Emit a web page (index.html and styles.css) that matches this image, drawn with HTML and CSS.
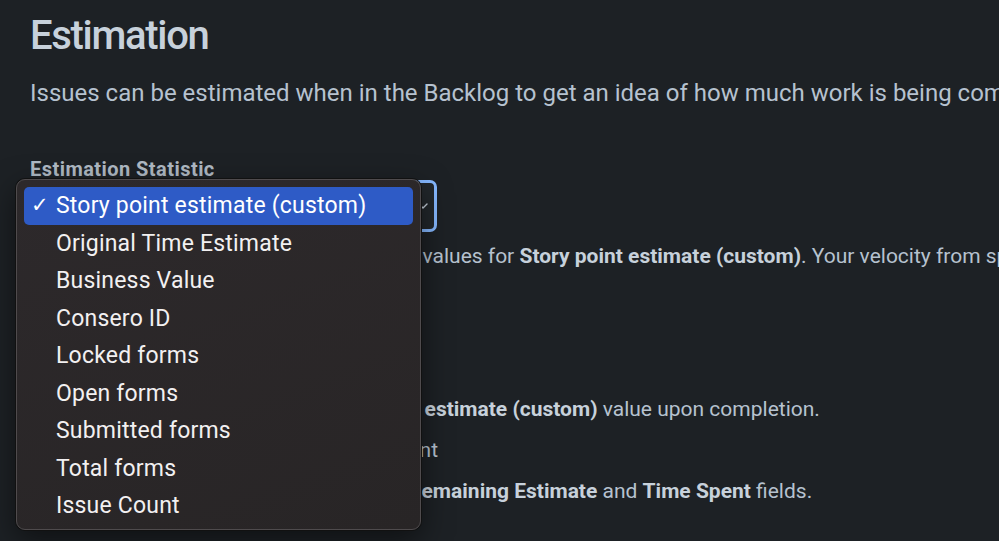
FILE: index.html
```html
<!DOCTYPE html>
<html lang="en">

<head>
    <meta charset="UTF-8">
    <meta name="viewport" content="width=device-width, initial-scale=1.0">
    <title>Board settings - Estimation</title>
    <link rel="stylesheet" href="styles.css">
</head>

<body>
    <main class="page">
        <h1 class="title">Estimation</h1>
        <p class="intro">Issues can be estimated when in the Backlog to get an idea of how much work is being committed to in a sprint.</p>

        <!-- Estimation statistic field, with the native popup open -->
        <div class="field">
            <div class="field-label">Estimation Statistic</div>
            <div class="select-wrap">
                <div class="select-box">
                    <span class="select-value">Story point estimate (custom)</span>
                    <svg class="chevron" width="14" height="14" viewBox="0 0 14 14">
                        <path d="M3 5l4 4 4-4" fill="none" stroke="#c7d1db" stroke-width="1.4" stroke-linecap="round" stroke-linejoin="round"/>
                    </svg>
                </div>
                <ul class="menu">
                    <li class="menu-item selected"><span class="check">✓</span>Story point estimate (custom)</li>
                    <li class="menu-item">Original Time Estimate</li>
                    <li class="menu-item">Business Value</li>
                    <li class="menu-item">Consero ID</li>
                    <li class="menu-item">Locked forms</li>
                    <li class="menu-item">Open forms</li>
                    <li class="menu-item">Submitted forms</li>
                    <li class="menu-item">Total forms</li>
                    <li class="menu-item">Issue Count</li>
                </ul>
            </div>
            <p class="help">The backlog and board will use estimated values for <b>Story point estimate (custom)</b>. Your velocity from sprints is calculated from this.</p>
        </div>

        <!-- Time tracking -->
        <section class="tracking">
            <h2 class="field-label">Time Tracking</h2>
            <div class="option"><span class="radio"></span>None</div>
            <p class="help">Tracking only uses the Story point <b>estimate (custom)</b> value upon completion.</p>
            <div class="option"><span class="radio checked"></span>Remaining Estimate and Time Spent</div>
            <p class="help">Time tracking is based upon the <b>Remaining Estimate</b> and <b>Time Spent</b> fields.</p>
        </section>
    </main>
</body>

</html>
```

FILE: styles.css
```css
body {
    margin: 0;
    background-color: #1d2125;
    color: #b6c2cf;
    font-family: Roboto, "Liberation Sans", sans-serif;
}

.page {
    padding: 12px 0 0 30px;
    white-space: nowrap;
    overflow: hidden;
    height: 529px;
}

.title {
    margin: 0;
    font-size: 40px;
    line-height: 48px;
    font-weight: 500;
    letter-spacing: -1.3px;
    color: #c7d1db;
}

.intro {
    margin: 17px 0 0;
    font-size: 24px;
    line-height: 32px;
}

.field-label {
    margin: 50px 0 0;
    font-size: 20px;
    line-height: 20px;
    font-weight: 700;
    letter-spacing: 0.45px;
    color: #b0bac4;
}

.select-wrap {
    position: relative;
    width: 407px;
    margin-top: 1px;
}

.select-box {
    box-sizing: border-box;
    height: 52px;
    border: 3px solid #85b8ff;
    border-radius: 7px;
    background-color: #22272b;
    display: flex;
    align-items: center;
    justify-content: space-between;
    padding: 0 4px 0 14px;
    font-size: 21px;
}

/* Native macOS popup drawn over the select */
.menu {
    position: absolute;
    top: -1px;
    left: -14px;
    width: 405px;
    height: 351px;
    box-sizing: border-box;
    margin: 0;
    padding: 7px 7px 0;
    list-style: none;
    background: linear-gradient(160deg, #2d292b, #282526);
    border: 1px solid #4f4b4d;
    border-radius: 9px;
    box-shadow: 0 0 0 1px #111, 0 10px 30px rgba(0, 0, 0, 0.5);
    font-size: 23px;
    letter-spacing: 0.2px;
    color: #f2f0f1;
}

.menu-item {
    height: 37.5px;
    line-height: 37px;
    padding-left: 32px;
    position: relative;
    border-radius: 5px;
}

.menu-item.selected {
    background-color: #2e5bc6;
    color: #fff;
}

.check {
    position: absolute;
    left: 7px;
    font-size: 21px;
}

.help {
    margin: 10px 0 0;
    font-size: 21px;
    line-height: 28px;
}

.help b {
    color: #c7d1db;
}

.tracking .field-label {
    margin-top: 51px;
}

.option {
    display: flex;
    align-items: center;
    gap: 12px;
    margin: 13px 0 0 40px;
    font-size: 21px;
    line-height: 28px;
}

.radio {
    width: 14px;
    height: 14px;
    border: 2px solid #8c9bab;
    border-radius: 50%;
}

.radio.checked {
    border: 5px solid #579dff;
    width: 8px;
    height: 8px;
}

.tracking .help {
    margin: 13px 0 0 75px;
}
```
